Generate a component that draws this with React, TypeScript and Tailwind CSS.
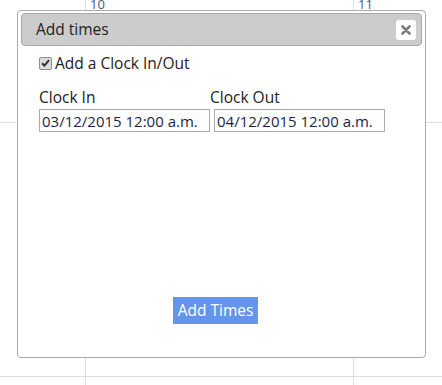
import React from 'react';

const font = { fontFamily: '"Open Sans", "Noto Sans", Arial, sans-serif' };

function CalendarBackground() {
  // calendar cells behind the dialog
  return (
    <div className="-mt-[2px] grid grid-cols-[86px_268px_1fr] grid-rows-[125px_254px_1fr] text-[13px] leading-none text-[#45568a]">
      <div className="border-r border-b border-[#ddd]" />
      <div className="border-r border-b border-[#ddd] pl-[4px]">10</div>
      <div className="border-b border-[#ddd] pl-[4px]">11</div>
      <div className="border-r border-b border-[#ddd]" />
      <div className="border-r border-b border-[#ddd]" />
      <div className="border-b border-[#ddd]" />
      <div className="border-r border-[#ddd] h-[20px]" />
      <div className="border-r border-[#ddd]" />
      <div />
    </div>
  );
}

function CheckBox() {
  return (
    <span className="flex h-[13px] w-[13px] items-center justify-center rounded-[2px] border border-[#8f8f8f] bg-[#dcdcdc]">
      <svg width="9" height="8" viewBox="0 0 9 8">
        <path d="M1 4.2 L3.4 6.6 L8 1.2" fill="none" stroke="#333" strokeWidth="2" />
      </svg>
    </span>
  );
}

export default function App() {
  return (
    <div className="relative h-[385px] w-[442px] overflow-hidden bg-white" style={font}>
      <CalendarBackground />

      <div className="absolute left-[17px] top-[10px] flex h-[348px] w-[409px] flex-col rounded-[4px] border border-[#aaa] bg-white px-[3px] pt-[2px]">
        <div className="flex h-[33px] items-center justify-between rounded-[4px] border border-[#aaa] bg-[#cccccc] pl-[14px] pr-[5px]">
          <span className="text-[15.5px] text-[#222]">Add times</span>
          <button className="flex h-[20px] w-[20px] items-center justify-center rounded-[3px] bg-white">
            <svg width="10" height="10" viewBox="0 0 10 10">
              <path d="M1.5 1.5 L8.5 8.5 M8.5 1.5 L1.5 8.5" stroke="#7a7a7a" strokeWidth="2.6" strokeLinecap="round" />
            </svg>
          </button>
        </div>

        <div className="flex flex-1 flex-col pl-[18px] text-[15.5px] text-[#222]">
          <label className="mt-[7px] flex items-center gap-[3px] leading-[20px]">
            <CheckBox />
            <span>Add a Clock In/Out</span>
          </label>

          <div className="mt-[14px] flex gap-[4px]">
            <div className="flex flex-col">
              <span className="leading-[20px]">Clock In</span>
              <input
                readOnly
                value="03/12/2015 12:00 a.m."
                className="mt-[2px] h-[23px] w-[171px] border border-[#aaa] px-[2px] text-[15px] text-[#1a1f4a] outline-none"
                style={font}
              />
            </div>
            <div className="flex flex-col">
              <span className="-ml-[4px] leading-[20px]">Clock Out</span>
              <input
                readOnly
                value="04/12/2015 12:00 a.m."
                className="mt-[2px] h-[23px] w-[171px] border border-[#aaa] px-[2px] text-[15px] text-[#1a1f4a] outline-none"
                style={font}
              />
            </div>
          </div>

          <button className="ml-[134px] mt-[165px] h-[27px] w-[85px] bg-[#6495ed] text-[15.5px] text-white" style={font}>
            Add Times
          </button>
        </div>
      </div>
    </div>
  );
}
